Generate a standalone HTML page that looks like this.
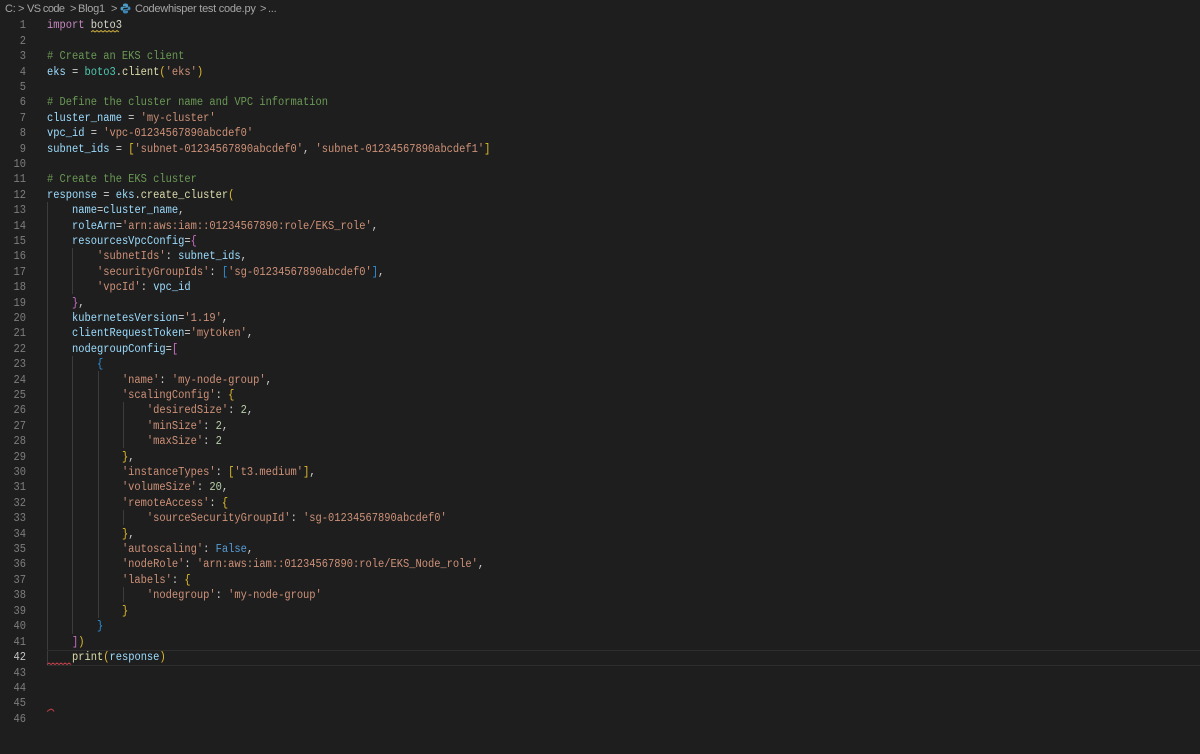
<!DOCTYPE html>
<html><head><meta charset="utf-8"><style>
html,body{margin:0;padding:0;background:#1e1e1e;}
#r{position:relative;width:1200px;height:754px;overflow:hidden;background:#1e1e1e;}
.b{position:absolute;top:2px;height:14px;font:11px/14px "Liberation Sans",sans-serif;letter-spacing:-.25px;color:#a6a6a6;white-space:pre;}
.l,.n{position:absolute;height:15px;line-height:15px;margin-top:1.5px;font-family:"Liberation Mono",monospace;font-size:10.42px;white-space:pre;transform:scaleY(1.12);transform-origin:50% 50%;}
.n{left:0;width:26px;text-align:right;color:#7d7d7d;}
.l{left:47px;color:#d0d0d0;}
.g{position:absolute;width:1px;background:#3c3c3c;}
.k{color:#c586c0}.v{color:#9cdcfe}.s{color:#ce9178}.c{color:#6a9955}.f{color:#dcdcaa}.t{color:#4ec9b0}.y{color:#e0bb2c}.p{color:#c86fc4}.u{color:#2f8fd8}.m{color:#b5cea8}.o{color:#569cd6}
</style></head><body><div id="r">
<div class="b" style="left:5px">C:</div><div class="b" style="left:18px">&gt;</div>
<div class="b" style="left:27px;letter-spacing:-.6px">VS code</div><div class="b" style="left:70px">&gt;</div>
<div class="b" style="left:78px">Blog1</div><div class="b" style="left:111px">&gt;</div>
<svg style="position:absolute;left:120px;top:3px" width="11" height="11" viewBox="0 0 11 11"><path d="M5.5 .5C3.5 .5 3 1.2 3 2.2V3.3H5.7V3.8H2C1 3.8 .5 4.6 .5 5.6S1 7.5 2 7.5H3V6.2C3 5.3 3.7 4.7 4.6 4.7H7C7.7 4.7 8 4.2 8 3.6V2.2C8 1.1 7.2 .5 5.5 .5Z" fill="#4d9bc9"/><path d="M5.5 10.5C7.5 10.5 8 9.8 8 8.8V7.7H5.3V7.2H9C10 7.2 10.5 6.4 10.5 5.4S10 3.5 9 3.5H8V4.8C8 5.7 7.3 6.3 6.4 6.3H4C3.3 6.3 3 6.8 3 7.4V8.8C3 9.9 3.8 10.5 5.5 10.5Z" fill="#3f86b5"/></svg>
<div class="b" style="left:135px">Codewhisper test code.py</div><div class="b" style="left:260px">&gt;</div><div class="b" style="left:268px">...</div>

<div class="g" style="left:47px;top:202px;height:463px"></div>
<div class="g" style="left:72px;top:248px;height:46px"></div>
<div class="g" style="left:72px;top:356px;height:278px"></div>
<div class="g" style="left:98px;top:371px;height:247px"></div>
<div class="g" style="left:123px;top:402px;height:46px"></div>
<div class="g" style="left:123px;top:510px;height:15px"></div>
<div class="g" style="left:123px;top:587px;height:15px"></div>
<div style="position:absolute;left:47px;right:0;top:650px;height:14px;border-top:1px solid #2e2e2e;border-bottom:1px solid #2e2e2e"></div>

<div class="n" style="top:17px">1</div><div class="l" style="top:17px"><span class="k">import</span> <span style="color:#d6d6c8">boto3</span></div>
<div class="n" style="top:33px">2</div>
<div class="n" style="top:48px">3</div><div class="l" style="top:48px"><span class="c"># Create an EKS client</span></div>
<div class="n" style="top:64px">4</div><div class="l" style="top:64px"><span class="v">eks</span> = <span class="t">boto3</span>.<span class="f">client</span><span class="y">(</span><span class="s">'eks'</span><span class="y">)</span></div>
<div class="n" style="top:79px">5</div>
<div class="n" style="top:94px">6</div><div class="l" style="top:94px"><span class="c"># Define the cluster name and VPC information</span></div>
<div class="n" style="top:110px">7</div><div class="l" style="top:110px"><span class="v">cluster_name</span> = <span class="s">'my-cluster'</span></div>
<div class="n" style="top:125px">8</div><div class="l" style="top:125px"><span class="v">vpc_id</span> = <span class="s">'vpc-01234567890abcdef0'</span></div>
<div class="n" style="top:141px">9</div><div class="l" style="top:141px"><span class="v">subnet_ids</span> = <span class="y">[</span><span class="s">'subnet-01234567890abcdef0'</span>, <span class="s">'subnet-01234567890abcdef1'</span><span class="y">]</span></div>
<div class="n" style="top:156px">10</div>
<div class="n" style="top:171px">11</div><div class="l" style="top:171px"><span class="c"># Create the EKS cluster</span></div>
<div class="n" style="top:187px">12</div><div class="l" style="top:187px"><span class="v">response</span> = <span class="v">eks</span>.<span class="f">create_cluster</span><span class="y">(</span></div>
<div class="n" style="top:202px">13</div><div class="l" style="top:202px">    <span class="v">name</span>=<span class="v">cluster_name</span>,</div>
<div class="n" style="top:218px">14</div><div class="l" style="top:218px">    <span class="v">roleArn</span>=<span class="s">'arn:aws:iam::01234567890:role/EKS_role'</span>,</div>
<div class="n" style="top:233px">15</div><div class="l" style="top:233px">    <span class="v">resourcesVpcConfig</span>=<span class="p">{</span></div>
<div class="n" style="top:248px">16</div><div class="l" style="top:248px">        <span class="s">'subnetIds'</span>: <span class="v">subnet_ids</span>,</div>
<div class="n" style="top:264px">17</div><div class="l" style="top:264px">        <span class="s">'securityGroupIds'</span>: <span class="u">[</span><span class="s">'sg-01234567890abcdef0'</span><span class="u">]</span>,</div>
<div class="n" style="top:279px">18</div><div class="l" style="top:279px">        <span class="s">'vpcId'</span>: <span class="v">vpc_id</span></div>
<div class="n" style="top:295px">19</div><div class="l" style="top:295px">    <span class="p">}</span>,</div>
<div class="n" style="top:310px">20</div><div class="l" style="top:310px">    <span class="v">kubernetesVersion</span>=<span class="s">'1.19'</span>,</div>
<div class="n" style="top:325px">21</div><div class="l" style="top:325px">    <span class="v">clientRequestToken</span>=<span class="s">'mytoken'</span>,</div>
<div class="n" style="top:341px">22</div><div class="l" style="top:341px">    <span class="v">nodegroupConfig</span>=<span class="p">[</span></div>
<div class="n" style="top:356px">23</div><div class="l" style="top:356px">        <span class="u">{</span></div>
<div class="n" style="top:372px">24</div><div class="l" style="top:372px">            <span class="s">'name'</span>: <span class="s">'my-node-group'</span>,</div>
<div class="n" style="top:387px">25</div><div class="l" style="top:387px">            <span class="s">'scalingConfig'</span>: <span class="y">{</span></div>
<div class="n" style="top:402px">26</div><div class="l" style="top:402px">                <span class="s">'desiredSize'</span>: <span class="m">2</span>,</div>
<div class="n" style="top:418px">27</div><div class="l" style="top:418px">                <span class="s">'minSize'</span>: <span class="m">2</span>,</div>
<div class="n" style="top:433px">28</div><div class="l" style="top:433px">                <span class="s">'maxSize'</span>: <span class="m">2</span></div>
<div class="n" style="top:449px">29</div><div class="l" style="top:449px">            <span class="y">}</span>,</div>
<div class="n" style="top:464px">30</div><div class="l" style="top:464px">            <span class="s">'instanceTypes'</span>: <span class="y">[</span><span class="s">'t3.medium'</span><span class="y">]</span>,</div>
<div class="n" style="top:479px">31</div><div class="l" style="top:479px">            <span class="s">'volumeSize'</span>: <span class="m">20</span>,</div>
<div class="n" style="top:495px">32</div><div class="l" style="top:495px">            <span class="s">'remoteAccess'</span>: <span class="y">{</span></div>
<div class="n" style="top:510px">33</div><div class="l" style="top:510px">                <span class="s">'sourceSecurityGroupId'</span>: <span class="s">'sg-01234567890abcdef0'</span></div>
<div class="n" style="top:526px">34</div><div class="l" style="top:526px">            <span class="y">}</span>,</div>
<div class="n" style="top:541px">35</div><div class="l" style="top:541px">            <span class="s">'autoscaling'</span>: <span class="o">False</span>,</div>
<div class="n" style="top:556px">36</div><div class="l" style="top:556px">            <span class="s">'nodeRole'</span>: <span class="s">'arn:aws:iam::01234567890:role/EKS_Node_role'</span>,</div>
<div class="n" style="top:572px">37</div><div class="l" style="top:572px">            <span class="s">'labels'</span>: <span class="y">{</span></div>
<div class="n" style="top:587px">38</div><div class="l" style="top:587px">                <span class="s">'nodegroup'</span>: <span class="s">'my-node-group'</span></div>
<div class="n" style="top:603px">39</div><div class="l" style="top:603px">            <span class="y">}</span></div>
<div class="n" style="top:618px">40</div><div class="l" style="top:618px">        <span class="u">}</span></div>
<div class="n" style="top:634px">41</div><div class="l" style="top:634px">    <span class="p">]</span><span class="y">)</span></div>
<div class="n" style="top:649px;color:#c6c6c6">42</div><div class="l" style="top:649px">    <span class="f">print</span><span class="y">(</span><span class="v">response</span><span class="y">)</span></div>
<div class="n" style="top:665px">43</div>
<div class="n" style="top:680px">44</div>
<div class="n" style="top:695px">45</div>
<div class="n" style="top:711px">46</div>

<svg style="position:absolute;left:0;top:0;pointer-events:none" width="1200" height="754" fill="none" stroke-width="1">
<path d="M91 32l2-1.5 2 1.5 2-1.5 2 1.5 2-1.5 2 1.5 2-1.5 2 1.5 2-1.5 2 1.5 2-1.5 2 1.5 2-1.5 2 1.5" stroke="#c9a83c"/>
<path d="M47 664.5l2-1.5 2 1.5 2-1.5 2 1.5 2-1.5 2 1.5 2-1.5 2 1.5 2-1.5 2 1.5 2-1.5 2 1.5" stroke="#c4414a"/>
<path d="M47 711.5l2-1.5 2-1 2 1 1 1.5" stroke="#c4414a"/>
</svg>
</div></body></html>
